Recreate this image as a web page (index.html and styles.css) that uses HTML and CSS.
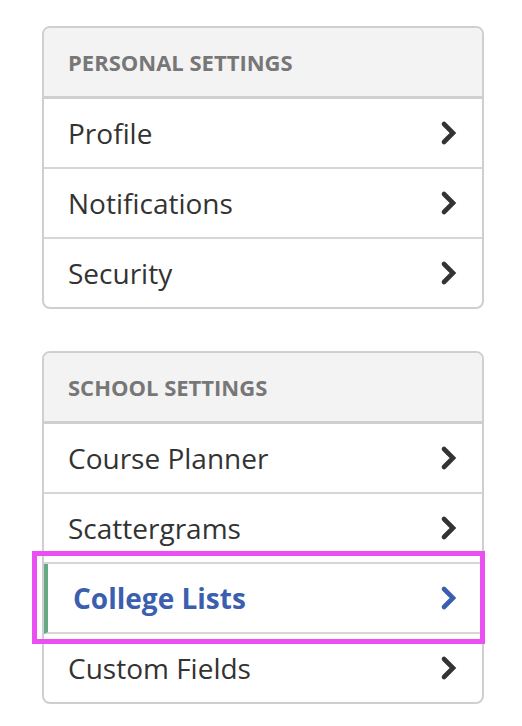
FILE: index.html
```
<!DOCTYPE html>
<html lang="en">
<head>
    <meta charset="UTF-8">
    <meta name="viewport" content="width=device-width, initial-scale=1.0">
    <title>Settings</title>
    <link rel="stylesheet" href="styles.css">
</head>
<body>
    <div class="container">
        <div class="card">
            <div class="card-header">PERSONAL SETTINGS</div>
            <a class="row" href="#">Profile
                <svg class="chevron" viewBox="0 0 18 26"><path d="M4 4 L13 13 L4 22"/></svg>
            </a>
            <a class="row" href="#">Notifications
                <svg class="chevron" viewBox="0 0 18 26"><path d="M4 4 L13 13 L4 22"/></svg>
            </a>
            <a class="row" href="#">Security
                <svg class="chevron" viewBox="0 0 18 26"><path d="M4 4 L13 13 L4 22"/></svg>
            </a>
        </div>
        <div class="card">
            <div class="card-header">SCHOOL SETTINGS</div>
            <a class="row" href="#">Course Planner
                <svg class="chevron" viewBox="0 0 18 26"><path d="M4 4 L13 13 L4 22"/></svg>
            </a>
            <a class="row" href="#">Scattergrams
                <svg class="chevron" viewBox="0 0 18 26"><path d="M4 4 L13 13 L4 22"/></svg>
            </a>
            <a class="row active" href="#">College Lists
                <svg class="chevron" viewBox="0 0 18 26"><path d="M4 4 L13 13 L4 22"/></svg>
                <span class="highlight"></span>
            </a>
            <a class="row" href="#">Custom Fields
                <svg class="chevron" viewBox="0 0 18 26"><path d="M4 4 L13 13 L4 22"/></svg>
            </a>
        </div>
    </div>
</body>
</html>
```

FILE: styles.css
```
body {
    margin: 0;
    background-color: #fff;
    font-family: "Open Sans", "Liberation Sans", sans-serif;
}

.container {
    display: flex;
    flex-direction: column;
    gap: 42px;
    width: 442px;
    padding: 26px 0 0 42px;
}

.card {
    border: 2px solid #cfcfcf;
    border-radius: 8px;
    background-color: #fff;
}

.card-header {
    height: 68px;
    display: flex;
    align-items: center;
    padding-left: 24px;
    background-color: #f3f3f3;
    border-bottom: 3px solid #cfcfcf;
    border-radius: 6px 6px 0 0;
    color: #777;
    font-size: 22px;
    font-weight: 700;
}

.row {
    position: relative;
    height: 68px;
    display: flex;
    align-items: center;
    justify-content: space-between;
    padding: 0 24px 0 24px;
    border-bottom: 2px solid #d6d6d6;
    color: #333;
    font-size: 28px;
    text-decoration: none;
}

.row:last-child {
    border-bottom: none;
}

.chevron {
    width: 18px;
    height: 26px;
    fill: none;
    stroke: #333;
    stroke-width: 4.6;
    stroke-linecap: round;
    stroke-linejoin: miter;
}

.row.active {
    color: #3b5fae;
    font-weight: 700;
    padding-left: 25px;
    border-left: 4px solid #66a982;
}

.row.active .chevron {
    stroke: #3b5fae;
}

/* annotation frame around the selected row */
.highlight {
    position: absolute;
    top: -13px;
    left: -16px;
    right: -3px;
    bottom: -12px;
    border: 5px solid #ea4ff2;
    pointer-events: none;
}
```
